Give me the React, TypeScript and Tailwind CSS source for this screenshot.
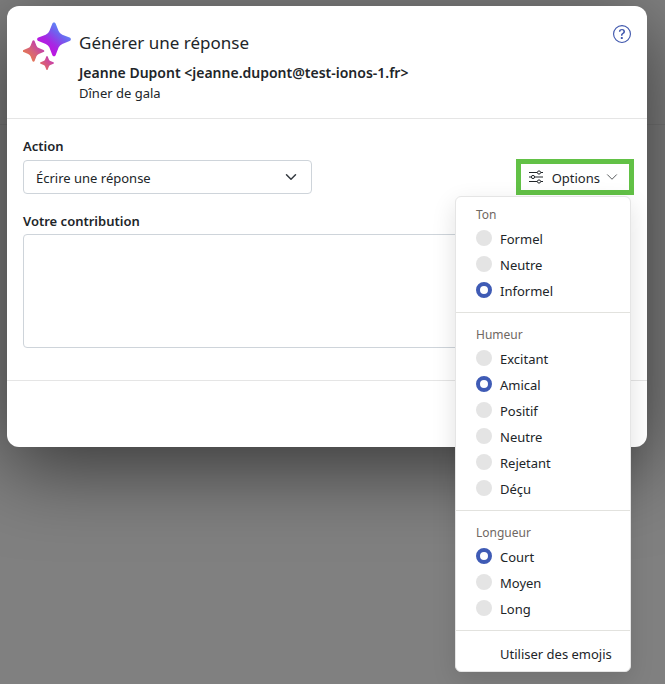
import React, { useState } from 'react';

interface OptionGroup {
  name: string;
  title: string;
  choices: string[];
}

const optionGroups: OptionGroup[] = [
  { name: 'tone', title: 'Ton', choices: ['Formel', 'Neutre', 'Informel'] },
  { name: 'mood', title: 'Humeur', choices: ['Excitant', 'Amical', 'Positif', 'Neutre', 'Rejetant', 'Déçu'] },
  { name: 'length', title: 'Longueur', choices: ['Court', 'Moyen', 'Long'] },
];

// Four-pointed star with rounded tips, 34 units wide and centred on 0,0
const STAR =
  'M-1.700-15.600C-1.200-17.300 1.200-17.300 1.700-15.600L4.600-8.300Q5.700-5.700 8.300-4.600L15.600-1.700C17.300-1.200 17.300 1.200 15.600 1.700L8.300 4.600Q5.700 5.700 4.600 8.300L1.700 15.600C1.200 17.300-1.200 17.300-1.700 15.600L-4.600 8.300Q-5.700 5.700-8.300 4.600L-15.600 1.700C-17.300 1.200-17.300-1.200-15.600-1.700L-8.300-4.600Q-5.700-5.700-4.600-8.300Z';

const SparklesLogo: React.FC = () => (
  <svg width="48" height="48" viewBox="0 0 48 48" aria-hidden="true">
    <defs>
      <linearGradient id="star-violet" x1="0.2" y1="0.85" x2="0.8" y2="0.15">
        <stop offset="0" stopColor="#c50fe0" />
        <stop offset="0.35" stopColor="#a826e3" />
        <stop offset="0.7" stopColor="#7160ee" />
        <stop offset="1" stopColor="#5a91fa" />
      </linearGradient>
      <linearGradient id="star-orange" x1="0.1" y1="0.9" x2="0.9" y2="0.1">
        <stop offset="0" stopColor="#ec8040" />
        <stop offset="0.5" stopColor="#d4607f" />
        <stop offset="1" stopColor="#b92fc0" />
      </linearGradient>
      <linearGradient id="star-pink" x1="0.1" y1="0.9" x2="0.9" y2="0.1">
        <stop offset="0" stopColor="#e57058" />
        <stop offset="1" stopColor="#c236ba" />
      </linearGradient>
    </defs>
    <path fill="url(#star-violet)" transform="translate(31 17.300)" d={STAR} />
    <path fill="url(#star-orange)" transform="translate(10.500 29) scale(0.640)" d={STAR} />
    <path fill="url(#star-pink)" transform="translate(24 41) scale(0.410)" d={STAR} />
  </svg>
);

const HelpIcon: React.FC = () => (
  <svg width="18" height="18" viewBox="0 0 16 16" fill="currentColor" aria-hidden="true">
    <path d="M8 15A7 7 0 1 1 8 1a7 7 0 0 1 0 14m0 1A8 8 0 1 0 8 0a8 8 0 0 0 0 16" />
    <path d="M5.255 5.786a.237.237 0 0 0 .241.247h.825c.138 0 .248-.113.266-.25.090-.656.540-1.134 1.342-1.134.686 0 1.314.343 1.314 1.168 0 .635-.374.927-.965 1.371-.673.489-1.206 1.060-1.168 1.987l.003.217a.25.25 0 0 0 .25.246h.811a.25.25 0 0 0 .25-.25v-.105c0-.718.273-.927 1.010-1.486.609-.463 1.244-.977 1.244-2.056 0-1.511-1.276-2.241-2.673-2.241-1.267 0-2.655.590-2.750 2.286m1.557 5.763c0 .533.425.927 1.010.927.609 0 1.028-.394 1.028-.927 0-.552-.420-.940-1.029-.940-.584 0-1.009.388-1.009.940" />
  </svg>
);

const SlidersIcon: React.FC = () => (
  <svg width="16" height="16" viewBox="0 0 16 16" fill="none" stroke="currentColor" aria-hidden="true">
    <path d="M1 3.500h8M13 3.500h2M1 8h2M7 8h8M1 12.500h8M13 12.500h2" />
    <circle cx="11" cy="3.500" r="1.600" />
    <circle cx="5" cy="8" r="1.600" />
    <circle cx="11" cy="12.500" r="1.600" />
  </svg>
);

const App: React.FC = () => {
  const [selected, setSelected] = useState<Record<string, string>>({
    tone: 'Informel',
    mood: 'Amical',
    length: 'Court',
  });
  const [emojis, setEmojis] = useState(false);
  const [open, setOpen] = useState(true);

  return (
    <div className="min-h-screen overflow-hidden bg-[#808080] bg-[linear-gradient(#787878,#787878)] bg-[length:100%_1px] bg-[position:0_124px] bg-no-repeat pt-1.5 pr-[18px] pl-[7px] font-['Noto_Sans','Open_Sans',sans-serif] text-[13px] text-[#212529]">
      <div role="dialog" aria-labelledby="dialog-title" className="rounded-xl bg-white shadow-[0_20px_80px_rgba(0,0,0,0.57)]">
        <header className="flex items-start border-b border-[#e5e5e5] px-4 pt-4 pb-[15px]">
          <SparklesLogo />
          <div className="ml-2 flex-1 pt-[9px]">
            <h1 id="dialog-title" className="mb-2 text-[17px] leading-6">Générer une réponse</h1>
            <p className="text-sm leading-5 font-semibold">Jeanne Dupont &lt;jeanne.dupont@test-ionos-1.fr&gt;</p>
            <p className="leading-5">Dîner de gala</p>
          </div>
          <button type="button" aria-label="Aide" className="mt-[3px] text-[#3f57ad]">
            <HelpIcon />
          </button>
        </header>

        <main className="px-4 pt-[17px] pb-8">
          <label htmlFor="action" className="mb-1 block leading-5 font-semibold">Action</label>
          <div className="flex items-center justify-between">
            <div className="relative w-[289px]">
              <select
                id="action"
                className="h-[34px] w-full appearance-none rounded border border-[#ced4da] bg-white px-3 pt-[3px]"
              >
                <option>Écrire une réponse</option>
              </select>
              <svg
                className="pointer-events-none absolute top-[11px] right-[15px]"
                width="12"
                height="12"
                viewBox="0 0 16 16"
                fill="none"
                stroke="#343a40"
                strokeWidth="2"
                strokeLinecap="round"
                strokeLinejoin="round"
                aria-hidden="true"
              >
                <path d="m2 5 6 6 6-6" />
              </svg>
            </div>

            <div className="relative pr-0.5">
              <button
                type="button"
                aria-expanded={open}
                onClick={() => setOpen(!open)}
                className="flex h-[26px] items-center pr-[11px] pl-[7px] outline-5 outline-[#62c146]"
              >
                <SlidersIcon />
                <span className="mr-1.5 ml-2 pt-[3px]">Options</span>
                <svg width="12" height="12" viewBox="0 0 16 16" fill="none" stroke="currentColor" strokeLinecap="round" aria-hidden="true">
                  <path d="m2 5 6 6 6-6" />
                </svg>
              </button>

              {open && (
                <div className="absolute top-8 right-0 z-10 w-44 rounded-md border border-[#e5e5e5] bg-white py-1 shadow-[0_8px_24px_rgba(0,0,0,0.12)]">
                  {optionGroups.map((group) => (
                    <fieldset key={group.name} className="mb-2 border-b border-[#e2e2de] pb-2">
                      <legend className="h-[25px] px-5 pt-1 text-xs leading-5 text-[#6f6762]">{group.title}</legend>
                      {group.choices.map((choice) => (
                        <label key={choice} className="flex h-[26px] items-start gap-2 px-5 leading-[26px]">
                          <input
                            type="radio"
                            name={group.name}
                            checked={selected[group.name] === choice}
                            onChange={() => setSelected({ ...selected, [group.name]: choice })}
                            className="mt-1 size-4 shrink-0 appearance-none rounded-full bg-[#e4e4e4] checked:border-4 checked:border-[#3f5bb5] checked:bg-white"
                          />
                          {choice}
                        </label>
                      ))}
                    </fieldset>
                  ))}
                  <label className="mt-2.5 flex h-[26px] items-start gap-2 px-5 leading-[26px]">
                    <input
                      type="checkbox"
                      checked={emojis}
                      onChange={() => setEmojis(!emojis)}
                      className="mt-1 size-4 shrink-0 appearance-none rounded checked:bg-[#3f5bb5]"
                    />
                    <span className="whitespace-nowrap">Utiliser des emojis</span>
                  </label>
                </div>
              )}
            </div>
          </div>

          <label htmlFor="contribution" className="mt-[17px] mb-[3px] block leading-5 font-semibold">
            Votre contribution
          </label>
          <textarea
            id="contribution"
            className="block h-[114px] w-full resize-none rounded border border-[#ced4da] bg-white px-3 py-1.5"
          />
        </main>

        <footer className="h-[67px] border-t border-[#e5e5e5]" />
      </div>
    </div>
  );
};

export default App;
